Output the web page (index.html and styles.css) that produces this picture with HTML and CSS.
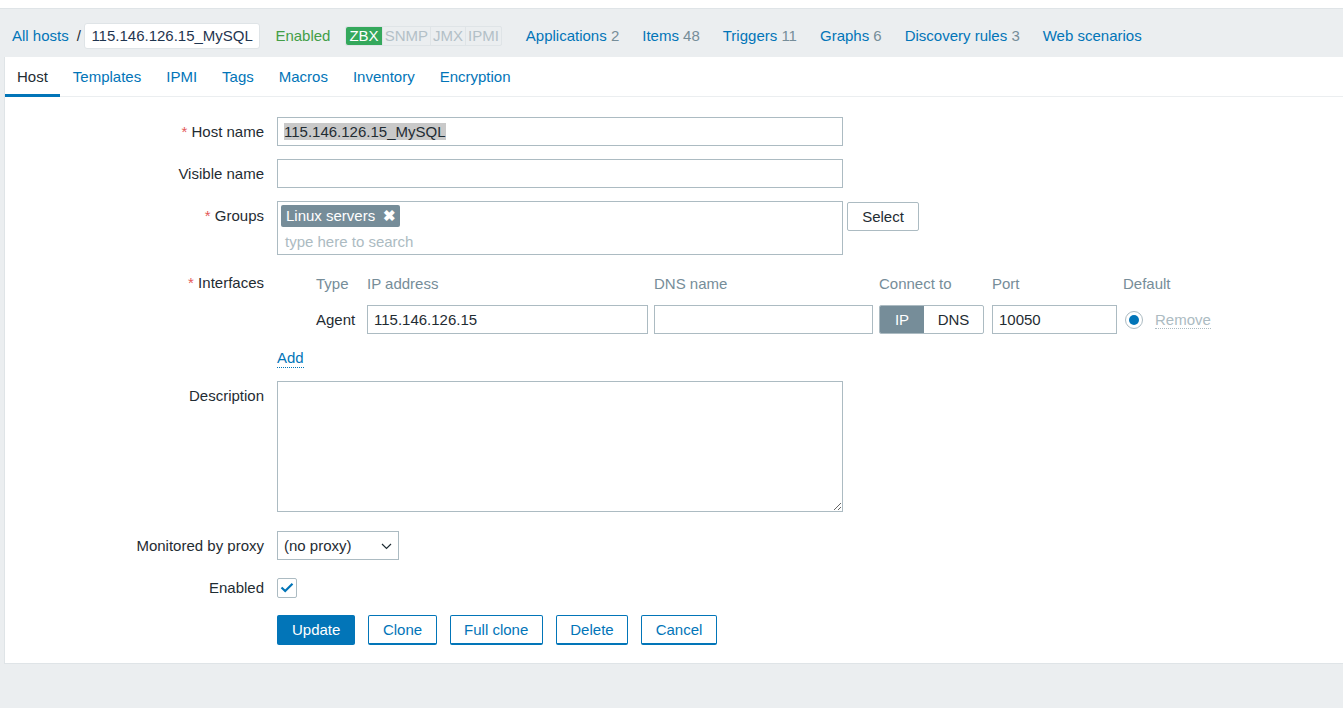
FILE: index.html
```html
<!DOCTYPE html>
<html lang="en">
<head>
<meta charset="utf-8">
<title>Hosts</title>
<link rel="stylesheet" href="styles.css">
</head>
<body>
<div class="topstrip"></div>
<div class="header">
  <a class="crumb" href="#">All hosts</a><span class="sep">/</span><span class="crumb-current">115.146.126.15_MySQL</span>
  <span class="status-enabled">Enabled</span>
  <span class="badges"><span class="badge on">ZBX</span><span class="badge">SNMP</span><span class="badge">JMX</span><span class="badge">IPMI</span></span>
  <nav class="hostnav">
    <a href="#">Applications <span class="cnt">2</span></a>
    <a href="#">Items <span class="cnt">48</span></a>
    <a href="#">Triggers <span class="cnt">11</span></a>
    <a href="#">Graphs <span class="cnt">6</span></a>
    <a href="#">Discovery rules <span class="cnt">3</span></a>
    <a href="#">Web scenarios</a>
  </nav>
</div>
<div class="main">
  <div class="tabs">
    <a class="tab active" href="#">Host</a>
    <a class="tab" href="#">Templates</a>
    <a class="tab" href="#">IPMI</a>
    <a class="tab" href="#">Tags</a>
    <a class="tab" href="#">Macros</a>
    <a class="tab" href="#">Inventory</a>
    <a class="tab" href="#">Encryption</a>
  </div>
  <form class="form">
    <label class="lbl"><span class="req">*</span> Host name</label>
    <div class="field"><div class="input wide"><span class="hl">115.146.126.15_MySQL</span></div></div>

    <label class="lbl">Visible name</label>
    <div class="field"><div class="input wide"></div></div>

    <label class="lbl"><span class="req">*</span> Groups</label>
    <div class="field row">
      <div class="multiselect">
        <span class="chip">Linux servers <span class="chip-x">✖</span></span>
        <span class="ms-placeholder">type here to search</span>
      </div>
      <button type="button" class="btn-grey">Select</button>
    </div>

    <label class="lbl"><span class="req">*</span> Interfaces</label>
    <div class="field">
      <div class="iface">
        <span></span><span class="ih">Type</span><span class="ih">IP address</span><span class="ih">DNS name</span><span class="ih">Connect to</span><span class="ih">Port</span><span class="ih">Default</span>
        <span></span><span class="itype">Agent</span>
        <div class="input ip">115.146.126.15</div>
        <div class="input dns"></div>
        <div class="toggle"><span class="tg on">IP</span><span class="tg">DNS</span></div>
        <div class="input port">10050</div>
        <div class="defcell"><span class="radio"><span class="dot"></span></span><span class="remove">Remove</span></div>
      </div>
    </div>

    <span class="lbl empty"></span>
    <div class="field addrow"><a class="add" href="#">Add</a></div>

    <label class="lbl">Description</label>
    <div class="field"><textarea class="textarea"></textarea></div>

    <label class="lbl proxy-lbl">Monitored by proxy</label>
    <div class="field proxy-field">
      <div class="select">(no proxy)<svg class="chev" width="11" height="7" viewBox="0 0 11 7"><path d="M1 1 L5.5 5.5 L10 1" fill="none" stroke="#1f2c33" stroke-width="1.2"/></svg></div>
    </div>

    <label class="lbl">Enabled</label>
    <div class="field checkrow">
      <span class="checkbox"><svg width="14" height="11" viewBox="0 0 14 11"><path d="M1.5 5.5 L5.2 9 L12.5 1.8" fill="none" stroke="#0275b8" stroke-width="2.2"/></svg></span>
    </div>

    <span class="lbl empty"></span>
    <div class="field buttons">
      <button type="button" class="btn primary">Update</button>
      <button type="button" class="btn">Clone</button>
      <button type="button" class="btn">Full clone</button>
      <button type="button" class="btn">Delete</button>
      <button type="button" class="btn">Cancel</button>
    </div>
  </form>
</div>
</body>
</html>
```
FILE: styles.css
```css
* { box-sizing: border-box; }
html, body { margin: 0; padding: 0; }
body {
  background: #ebeef0;
  font-family: "Liberation Sans", Arial, sans-serif;
  font-size: 15px;
  color: #1f2c33;
  height: 708px;
  overflow: hidden;
}
a { text-decoration: none; color: #0275b8; }

.topstrip {
  height: 9px;
  background: #fff;
  border-bottom: 1px solid #dfe4e7;
}

.header {
  height: 48px;
  display: flex;
  align-items: center;
  padding: 5px 0 0 12px;
  white-space: nowrap;
}
.crumb { color: #0275b8; }
.sep { margin: 0 3px 0 8px; color: #1f2c33; }
.crumb-current {
  display: inline-block;
  height: 26px;
  line-height: 24px;
  padding: 0 6.5px;
  background: #fff;
  border: 1px solid #dfe4e7;
  border-radius: 3px;
  color: #1f3550;
}
.status-enabled { color: #429e47; margin-left: 15px; }
.badges {
  display: inline-flex;
  margin-left: 15px;
  border: 1px solid #dfe4e7;
  border-radius: 2px;
  height: 20px;
  background: #ebeef0;
}
.badge {
  padding: 0 2px;
  line-height: 18px;
  color: #b3c0c7;
  border-left: 1px solid #dfe4e7;
}
.badge:first-child { border-left: none; }
.badge.on { background: #34a85c; color: #fff; border-radius: 2px 0 0 2px; padding: 0 3px; }
.hostnav { display: flex; gap: 23px; margin-left: 24px; }
.hostnav .cnt { color: #768d99; }

.main {
  margin-left: 4px;
  background: #fff;
  border-left: 1px solid #dfe4e7;
  border-bottom: 1px solid #dfe4e7;
  height: 607px;
}
.tabs {
  display: flex;
  height: 40px;
  border-bottom: 1px solid #ebeef0;
}
.tab {
  padding: 1px 12.5px 0;
  line-height: 38px;
  color: #0275b8;
  position: relative;
}
.tab:first-child { padding: 1px 12.5px 0 12px; }
.tab.active { color: #1f2c33; }
.tab.active::after {
  content: "";
  position: absolute;
  left: 0; right: 0; bottom: -1px;
  height: 3px;
  background: #0275b8;
}

.form {
  display: grid;
  grid-template-columns: 259px 1fr;
  column-gap: 13px;
  row-gap: 13px;
  padding-top: 20px;
  align-items: start;
}
.lbl {
  text-align: right;
  line-height: 29px;
  height: 29px;
  white-space: nowrap;
}
.req { color: #e45959; }
.field { min-height: 29px; }
.row { display: flex; gap: 4px; align-items: flex-start; }

.input {
  height: 29px;
  border: 1px solid #acbbc2;
  background: #fff;
  line-height: 27px;
  padding: 0 6px;
  white-space: nowrap;
  overflow: hidden;
}
.input.wide { width: 566px; }
.hl { background: #c9c9c9; }

.multiselect {
  width: 566px;
  height: 54px;
  border: 1px solid #acbbc2;
  padding: 3px 3px;
  display: flex;
  flex-direction: column;
  align-items: flex-start;
}
.chip {
  display: inline-block;
  height: 22px;
  line-height: 22px;
  background: #768d99;
  color: #fff;
  padding: 0 4px 0 5px;
  border-radius: 2px;
}
.chip-x { margin-left: 4px; font-size: 15px; font-weight: bold; }
.ms-placeholder {
  color: #acbbc2;
  padding-left: 4px;
  line-height: 24px;
  margin-top: 3px;
}
.btn-grey {
  font: inherit;
  height: 29px;
  width: 72px;
  background: #fff;
  color: #1f2c33;
  border: 1px solid #acbbc2;
  border-radius: 2px;
  margin-top: 1px;
}

.iface {
  display: grid;
  grid-template-columns: 39px 51px 287px 225px 113px 131px auto;
  grid-template-rows: 30px 29px;
  row-gap: 7px;
  align-items: center;
}
.ih { color: #768d99; white-space: nowrap; }
.itype { color: #1f2c33; }
.input.ip { width: 281px; }
.input.dns { width: 219px; }
.input.port { width: 125px; }
.toggle {
  display: flex;
  width: 105px;
  height: 29px;
  border: 1px solid #acbbc2;
  border-radius: 2px;
  overflow: hidden;
}
.tg { line-height: 27px; text-align: center; flex: 1; }
.tg.on { background: #768d99; color: #fff; flex: 0 0 44px; }
.defcell { display: flex; align-items: center; padding-left: 2px; }
.radio {
  width: 18px; height: 18px;
  border: 1px solid #acbbc2;
  border-radius: 50%;
  display: flex; align-items: center; justify-content: center;
}
.dot { width: 10px; height: 10px; border-radius: 50%; background: #0275b8; }
.remove {
  margin-left: 12px;
  color: #acbbc2;
  border-bottom: 1px dotted #acbbc2;
  line-height: 17px;
}

.addrow { min-height: 21px; height: 21px; }
.add {
  display: inline-block;
  line-height: 18px;
  border-bottom: 1px dotted #0275b8;
  margin-top: 2px;
}
.form .lbl.empty { height: 21px; }

.textarea {
  display: block;
  width: 566px;
  height: 131px;
  border: 1px solid #acbbc2;
  border-radius: 0;
  resize: both;
  font: inherit;
  margin: 0;
}
.proxy-lbl, .proxy-field { margin-top: 6px; }
.select {
  width: 122px;
  height: 29px;
  border: 1px solid #acbbc2;
  line-height: 27px;
  padding: 0 6px;
  position: relative;
}
.chev { position: absolute; right: 6px; top: 11px; }

.checkrow { display: flex; align-items: center; height: 29px; }
.checkbox {
  width: 20px; height: 20px;
  border: 1px solid #acbbc2;
  border-radius: 2px;
  display: flex; align-items: center; justify-content: center;
}

.buttons { display: flex; gap: 13px; }
.btn {
  font: inherit;
  height: 30px;
  padding: 0 13.5px;
  background: #fff;
  color: #0275b8;
  border: 1px solid #0275b8;
  border-bottom-width: 2px;
  border-radius: 2px;
}
.btn.primary { background: #0275b8; color: #fff; padding: 0 14px; }
```
